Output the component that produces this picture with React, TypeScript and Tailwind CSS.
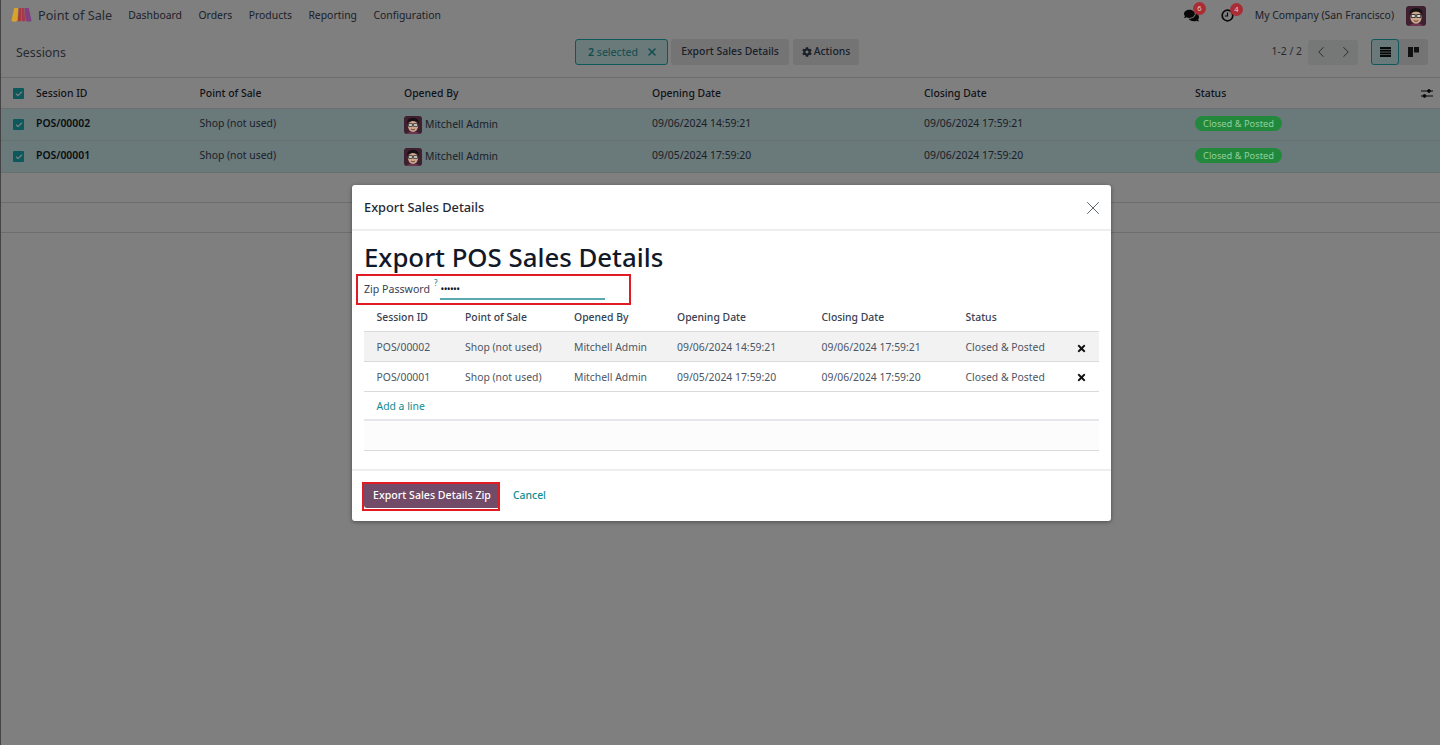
import React from "react";
import { X, ChevronLeft, ChevronRight, Check } from "lucide-react";
import { FaCog, FaComments, FaTimes } from "react-icons/fa";

const font = { fontFamily: '"Noto Sans", "Open Sans", sans-serif' };

function Avatar({ size }: { size: number }) {
  return (
    <svg width={size} height={size} viewBox="0 0 20 20" className="relative z-10 shrink-0 rounded-[3px]">
      <rect width="20" height="20" fill="#3f2030" />
      <path d="M2 20 Q10 14 18 20Z" fill="#6b3550" />
      <ellipse cx="10" cy="11.5" rx="5.6" ry="6.2" fill="#c9a68c" />
      <path d="M3.5 9 Q3 2 10 2 Q17 2 16.5 9 L15 6.5 Q10 4.5 5 6.5Z" fill="#151012" />
      <rect x="5.2" y="8.6" width="4" height="2.8" fill="#d8d8d0" stroke="#1c1c1c" strokeWidth=".8" />
      <rect x="10.8" y="8.6" width="4" height="2.8" fill="#d8d8d0" stroke="#1c1c1c" strokeWidth=".8" />
      <path d="M7.8 14.6 Q10 16.2 12.2 14.6" stroke="#6d3026" strokeWidth=".9" fill="none" />
    </svg>
  );
}

function Logo() {
  return (
    <svg width="21" height="15" viewBox="0 0 21 15" className="relative z-10">
      <path d="M3.2 0 H7.4 L6.4 12.5 Q3.6 15 0.4 12.8 Z" fill="#d6a32c" />
      <path d="M7.8 0 H10.3 L10.3 12.6 Q8.6 14.6 6.8 12.6 Z" fill="#a83a3e" />
      <path d="M10.7 0 H13.2 L14.2 12.6 Q12.4 14.6 10.7 12.6 Z" fill="#a8394f" />
      <path d="M13.6 0 H17.8 L20.6 12.8 Q17.6 15 14.6 12.5 Z" fill="#81407f" />
    </svg>
  );
}

function Box() {
  return (
    <span className="flex h-[11px] w-[11px] items-center justify-center rounded-[1px] bg-[#1ab0b8]">
      <Check size={8} strokeWidth={3.5} className="text-white" />
    </span>
  );
}

function Badge({ n }: { n: string }) {
  return (
    <span className="absolute -top-[6px] left-[9px] z-10 flex h-[13px] w-[13px] items-center justify-center rounded-full bg-[#a92d35] text-[7.5px] text-[#e8c4c6]">
      {n}
    </span>
  );
}

const cols = "grid grid-cols-[35px_163.5px_204.5px_248px_272px_271px_1fr] items-center";

function Row({ id, opened, closed }: { id: string; opened: string; closed: string }) {
  return (
    <div className={`${cols} h-[32px] border-b border-[#cfe0e2] bg-[#d4f2f4] pb-[2px] text-[#374151]`}>
      <div className="pl-[12px] pt-[2px]"><Box /></div>
      <div className="font-semibold text-[#111827]">{id}</div>
      <div>Shop (not used)</div>
      <div className="flex items-center gap-[3px] pt-[3px]"><Avatar size={18} /><span>Mitchell Admin</span></div>
      <div>{opened}</div>
      <div>{closed}</div>
      <div>
        <span className="relative z-10 inline-flex h-[15px] items-center rounded-full bg-[#22893c] px-[8px] text-[9.3px] text-[#93cf9f]">Closed &amp; Posted</span>
      </div>
    </div>
  );
}

const dlgCols = "grid grid-cols-[88.5px_109px_103px_144.5px_144px_107.5px_1fr] items-center pl-[12.5px]";

function DlgRow({ id, opened, shade, h }: { id: string; opened: string; shade?: boolean; h: string }) {
  return (
    <div className={`${dlgCols} ${h} border-b border-[#d8dadd] pt-[3px] ${shade ? "bg-[#f2f2f3]" : ""} text-[#4b5563]`}>
      <div>{id}</div>
      <div>Shop (not used)</div>
      <div>Mitchell Admin</div>
      <div>{opened}</div>
      <div>{id === "POS/00002" ? "09/06/2024 17:59:21" : "09/06/2024 17:59:20"}</div>
      <div>Closed &amp; Posted</div>
      <div className="pl-[3px]"><FaTimes size={11} className="text-[#111]" /></div>
    </div>
  );
}

export default function App() {
  return (
    <div className="relative h-[745px] w-[1440px] overflow-hidden border-l border-[#444] bg-white text-[10.4px] text-[#374151]" style={font}>
      <header className="flex h-[31px] items-center pl-[10px] pr-[14px]">
        <Logo />
        <span className="ml-[6px] text-[12.7px] text-[#4b5563]">Point of Sale</span>
        <nav className="ml-[16px] flex gap-[16.5px] pt-[1px] text-[#374151]">
          <span>Dashboard</span><span>Orders</span><span>Products</span><span>Reporting</span><span>Configuration</span>
        </nav>
        <div className="ml-auto flex items-center">
          <span className="relative mr-[22px]">
            <FaComments size={15} className="block text-[#111]" />
            <Badge n="6" />
          </span>
          <span className="relative mr-[21px]">
            <svg width="13" height="13" viewBox="0 0 13 13" fill="none" stroke="#111" className="block">
              <circle cx="6.5" cy="6.5" r="5.3" strokeWidth="1.7" />
              <path d="M6.5 3.5 V7 H3.8" strokeWidth="1.2" />
            </svg>
            <Badge n="4" />
          </span>
          <span className="mr-[12px] text-[#374151]">My Company (San Francisco)</span>
          <Avatar size={20} />
        </div>
      </header>

      <div className="flex h-[47px] items-center border-b border-[#d8dadd] pb-[4px] pl-[15px] pr-[12px]">
        <span className="w-[559px] pt-[2px] text-[12.4px] text-[#4b5563]">Sessions</span>
        <div className="flex h-[26px] w-[93px] items-center justify-between rounded-[3px] border border-[#1ab0b8] bg-[#d4f2f4] pl-[12px] pr-[9px] text-[#1a9aa0]">
          <span className="pt-[1px] text-[10.6px]"><b className="font-semibold">2</b> selected</span>
          <X size={12} strokeWidth={3} />
        </div>
        <div className="ml-[3px] flex h-[26px] w-[118px] items-center justify-center rounded-[3px] bg-[#e8e9ea] font-medium text-[#374151]">Export Sales Details</div>
        <div className="ml-[4px] flex h-[26px] w-[66px] items-center justify-center gap-[2px] rounded-[3px] bg-[#e8e9ea] font-medium text-[#374151]">
          <FaCog size={10} className="text-[#374151]" />Actions
        </div>
        <div className="ml-auto flex items-center">
          <span className="mr-[6px] text-[#4b5563]">1-2 / 2</span>
          <div className="flex h-[25px] w-[50px] items-center justify-around rounded-[3px] bg-[#eceeef] text-[#4b5563]">
            <ChevronLeft size={18} strokeWidth={1.3} /><ChevronRight size={18} strokeWidth={1.3} />
          </div>
          <div className="ml-[13px] flex h-[26px] w-[57px] rounded-[3px] bg-[#e8e9ea]">
            <div className="flex w-[28px] items-center justify-center rounded-[3px] border border-[#1ab0b8] bg-[#d4f2f4]">
              <svg width="11" height="10" viewBox="0 0 11 10" fill="#111"><rect width="11" height="2" /><rect y="2.7" width="11" height="2" /><rect y="5.4" width="11" height="2" /><rect y="8" width="11" height="2" /></svg>
            </div>
            <div className="flex flex-1 items-center justify-center">
              <svg width="11" height="10" viewBox="0 0 11 10" fill="#222"><rect width="5" height="10" /><rect x="6" width="5" height="5.5" /></svg>
            </div>
          </div>
        </div>
      </div>

      <div className={`${cols} h-[31px] border-b border-[#d8dadd] pt-[1px] font-medium text-[#1f2937]`}>
        <div className="pl-[12px]"><Box /></div>
        <div>Session ID</div><div>Point of Sale</div><div>Opened By</div><div>Opening Date</div><div>Closing Date</div>
        <div className="flex items-center justify-between pr-[7px]">
          Status
          <svg width="12" height="11" viewBox="0 0 12 11" stroke="#111" fill="#111" strokeWidth="1">
            <path d="M0 3 H12 M0 8 H12" /><circle cx="8" cy="3" r="1.4" /><circle cx="3.5" cy="8" r="1.4" />
          </svg>
        </div>
      </div>
      <Row id="POS/00002" opened="09/06/2024 14:59:21" closed="09/06/2024 17:59:21" />
      <Row id="POS/00001" opened="09/05/2024 17:59:20" closed="09/06/2024 17:59:20" />
      <div className="h-[29.5px] border-b border-[#d8dadd]" />
      <div className="h-[30px] border-b border-[#d8dadd]" />

      <div className="absolute inset-0 bg-black/50">
        <div className="absolute left-[351px] top-[185px] flex h-[336px] w-[759px] flex-col rounded-[3px] bg-white shadow-[0_1px_4px_rgba(0,0,0,0.4)]">
          <div className="flex h-[46px] items-center justify-between border-b-2 border-[#eceef0] pl-[12px] pr-[7px] pt-[2px]">
            <span className="text-[12.8px] font-medium text-[#1f2937]">Export Sales Details</span>
            <X size={22} strokeWidth={1} className="text-[#4b5563]" />
          </div>
          <div className="flex-1 px-[12px]">
            <h1 className="mt-[7px] h-[38px] text-[25.8px] font-medium leading-[38px] text-[#111827]">Export POS Sales Details</h1>
            <div className="mt-[2px] flex h-[24px] items-center text-[10.6px] text-[#374151]">
              <span>Zip Password</span>
              <sup className="-mt-[6px] ml-[4px] text-[8px] text-[#017e84]">?</sup>
              <div className="-mt-[2px] ml-[3px] h-[22px] w-[165px] border-b-2 border-[#5aa9ae] text-[10px] leading-[22px] tracking-[-0.6px] text-[#111827]">••••••</div>
            </div>
            <div className={`${dlgCols} h-[30px] border-b border-[#d8dadd] pt-[3px] font-medium text-[#374151]`}>
              <div>Session ID</div><div>Point of Sale</div><div>Opened By</div><div>Opening Date</div><div>Closing Date</div><div>Status</div>
            </div>
            <DlgRow id="POS/00002" opened="09/06/2024 14:59:21" shade h="h-[30px]" />
            <DlgRow id="POS/00001" opened="09/05/2024 17:59:20" h="h-[29.5px]" />
            <div className="flex h-[29.5px] items-center border-b-2 border-[#e5e7eb] pl-[12.5px] pt-[3px] text-[#0f8b91]">Add a line</div>
            <div className="h-[29.5px] border-b border-[#d8dadd] bg-[#fcfcfc]" />
          </div>
          <div className="flex h-[52px] items-center gap-[13px] border-t-2 border-[#eceef0] pb-[2px] pl-[12px]">
            <div className="flex h-[26px] w-[136px] items-center justify-center rounded-[3px] bg-[#714b67] pt-[2px] text-[10.6px] font-medium text-white">Export Sales Details Zip</div>
            <span className="pt-[2px] font-medium text-[#0f8b91]">Cancel</span>
          </div>
          <div className="absolute left-[4px] top-[89px] h-[31px] w-[275px] border-2 border-[#e01b24]" />
          <div className="absolute left-[10px] top-[297px] h-[29px] w-[138px] border-2 border-[#e01b24]" />
        </div>
      </div>
    </div>
  );
}
